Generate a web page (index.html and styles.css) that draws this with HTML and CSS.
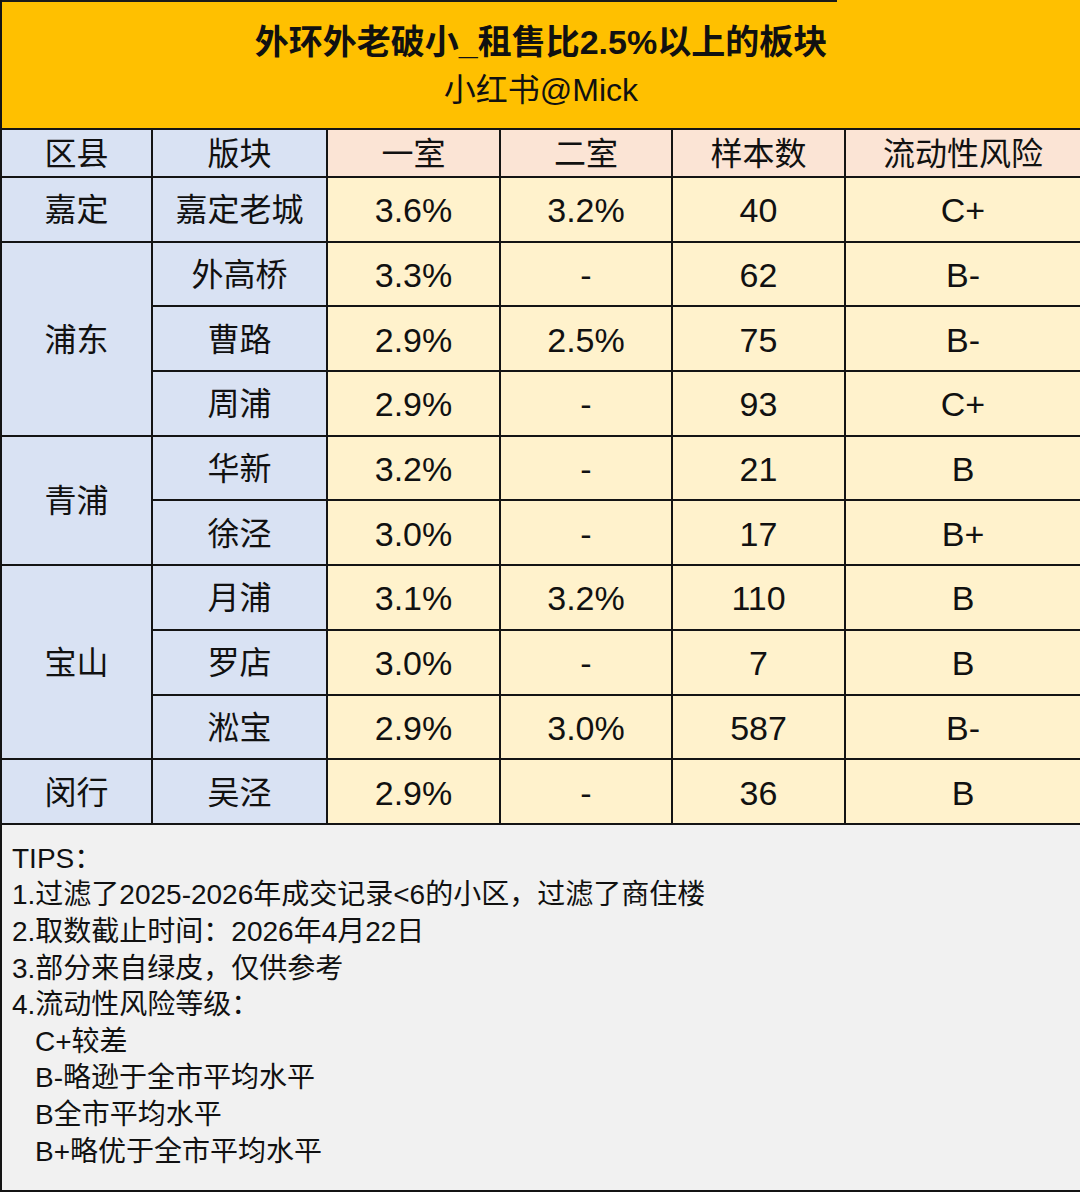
FILE: index.html
```html
<!DOCTYPE html>
<html lang="zh-CN">
<head>
<meta charset="utf-8">
<link rel="stylesheet" href="styles.css">
</head>
<body>
<div class="sheet">
  <header class="banner">
    <div class="title">外环外老破小_租售比2.5%以上的板块</div>
    <div class="subtitle">小红书@Mick</div>
  </header>
  <div class="grid">
    <div class="c hb">区县</div>
    <div class="c hb">版块</div>
    <div class="c hp">一室</div>
    <div class="c hp">二室</div>
    <div class="c hp">样本数</div>
    <div class="c hp">流动性风险</div>

    <div class="c b">嘉定</div>
    <div class="c b">嘉定老城</div>
    <div class="c y n">3.6%</div><div class="c y n">3.2%</div><div class="c y n">40</div><div class="c y n">C+</div>

    <div class="c b span3">浦东</div>
    <div class="c b">外高桥</div>
    <div class="c y n">3.3%</div><div class="c y n">-</div><div class="c y n">62</div><div class="c y n">B-</div>
    <div class="c b">曹路</div>
    <div class="c y n">2.9%</div><div class="c y n">2.5%</div><div class="c y n">75</div><div class="c y n">B-</div>
    <div class="c b">周浦</div>
    <div class="c y n">2.9%</div><div class="c y n">-</div><div class="c y n">93</div><div class="c y n">C+</div>

    <div class="c b span2">青浦</div>
    <div class="c b">华新</div>
    <div class="c y n">3.2%</div><div class="c y n">-</div><div class="c y n">21</div><div class="c y n">B</div>
    <div class="c b">徐泾</div>
    <div class="c y n">3.0%</div><div class="c y n">-</div><div class="c y n">17</div><div class="c y n">B+</div>

    <div class="c b span3">宝山</div>
    <div class="c b">月浦</div>
    <div class="c y n">3.1%</div><div class="c y n">3.2%</div><div class="c y n">110</div><div class="c y n">B</div>
    <div class="c b">罗店</div>
    <div class="c y n">3.0%</div><div class="c y n">-</div><div class="c y n">7</div><div class="c y n">B</div>
    <div class="c b">淞宝</div>
    <div class="c y n">2.9%</div><div class="c y n">3.0%</div><div class="c y n">587</div><div class="c y n">B-</div>

    <div class="c b">闵行</div>
    <div class="c b">吴泾</div>
    <div class="c y n">2.9%</div><div class="c y n">-</div><div class="c y n">36</div><div class="c y n">B</div>
  </div>
  <div class="tips">
    <div>TIPS：</div>
    <div>1.过滤了2025-2026年成交记录&lt;6的小区，过滤了商住楼</div>
    <div>2.取数截止时间：2026年4月22日</div>
    <div>3.部分来自绿皮，仅供参考</div>
    <div>4.流动性风险等级：</div>
    <div class="ind">C+较差</div>
    <div class="ind">B-略逊于全市平均水平</div>
    <div class="ind">B全市平均水平</div>
    <div class="ind">B+略优于全市平均水平</div>
  </div>
</div>
</body>
</html>
```
FILE: styles.css
```css
html, body {
  margin: 0;
  padding: 0;
  background: #ffffff;
}
body {
  font-family: "Liberation Sans", "Noto Sans CJK SC", sans-serif;
  color: #111111;
}
.sheet {
  width: 1080px;
  box-sizing: border-box;
  display: flex;
  flex-direction: column;
  gap: 2px;
  background: #141414;
  padding-left: 2px;
  padding-bottom: 2px;
}
.banner {
  height: 128px;
  box-sizing: border-box;
  padding-top: 20px;
  background:
    linear-gradient(#1a1a1a, #1a1a1a) 0 0 / 835px 2px no-repeat,
    #ffc000;
  text-align: center;
}
.title {
  font-size: 34px;
  font-weight: bold;
  line-height: 44px;
}
.subtitle {
  font-size: 32px;
  line-height: 44px;
  margin-top: 4px;
}
.grid {
  display: grid;
  grid-template-columns: 149px 173px 171px 170px 171px 234px;
  grid-template-rows: 46px repeat(10, 62.7px);
  gap: 2px;
  background: #141414;
}
.c {
  display: flex;
  align-items: center;
  justify-content: center;
  font-size: 32px;
  line-height: 1;
  padding-top: 2px;
}
.n {
  font-size: 34px;
}
.hb, .b { background: #d9e2f3; }
.hp { background: #fbe4d5; }
.y { background: #fff2cc; }
.span3 { grid-row: span 3; }
.span2 { grid-row: span 2; }
.tips {
  height: 365px;
  box-sizing: border-box;
  background: #f1f1f1;
  padding: 16px 10px 0;
  font-size: 28px;
  line-height: 36.6px;
}
.ind {
  padding-left: 23px;
}
```
